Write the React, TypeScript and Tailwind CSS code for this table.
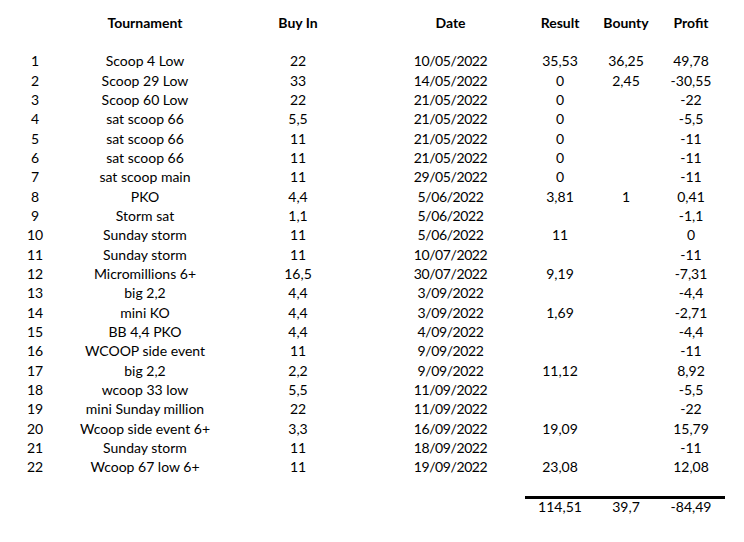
const rows: [string, string, string, string, string, string][] = [
  ["Scoop 4 Low", "22", "10/05/2022", "35,53", "36,25", "49,78"],
  ["Scoop 29 Low", "33", "14/05/2022", "0", "2,45", "-30,55"],
  ["Scoop 60 Low", "22", "21/05/2022", "0", "", "-22"],
  ["sat scoop 66", "5,5", "21/05/2022", "0", "", "-5,5"],
  ["sat scoop 66", "11", "21/05/2022", "0", "", "-11"],
  ["sat scoop 66", "11", "21/05/2022", "0", "", "-11"],
  ["sat scoop main", "11", "29/05/2022", "0", "", "-11"],
  ["PKO", "4,4", "5/06/2022", "3,81", "1", "0,41"],
  ["Storm sat", "1,1", "5/06/2022", "", "", "-1,1"],
  ["Sunday storm", "11", "5/06/2022", "11", "", "0"],
  ["Sunday storm", "11", "10/07/2022", "", "", "-11"],
  ["Micromillions 6+", "16,5", "30/07/2022", "9,19", "", "-7,31"],
  ["big 2,2", "4,4", "3/09/2022", "", "", "-4,4"],
  ["mini KO", "4,4", "3/09/2022", "1,69", "", "-2,71"],
  ["BB 4,4 PKO", "4,4", "4/09/2022", "", "", "-4,4"],
  ["WCOOP side event", "11", "9/09/2022", "", "", "-11"],
  ["big 2,2", "2,2", "9/09/2022", "11,12", "", "8,92"],
  ["wcoop 33 low", "5,5", "11/09/2022", "", "", "-5,5"],
  ["mini Sunday million", "22", "11/09/2022", "", "", "-22"],
  ["Wcoop side event 6+", "3,3", "16/09/2022", "19,09", "", "15,79"],
  ["Sunday storm", "11", "18/09/2022", "", "", "-11"],
  ["Wcoop 67 low 6+", "11", "19/09/2022", "23,08", "", "12,08"],
];

const grid = "grid grid-cols-[70px_150px_156px_149px_70px_62px_68px] items-center text-center h-[19.33px]";

export default function App() {
  return (
    <div
      className="w-[744px] h-[542px] bg-white text-black overflow-hidden pt-[13px] text-[14px] leading-none"
      style={{ fontFamily: "Lato, 'Liberation Sans', sans-serif" }}
    >
      <div className={grid + " font-bold"}>
        <div></div>
        <div>Tournament</div>
        <div>Buy In</div>
        <div>Date</div>
        <div>Result</div>
        <div>Bounty</div>
        <div>Profit</div>
      </div>
      <div className="h-[19.33px]"></div>
      {rows.map((r, i) => (
        <div key={i} className={grid}>
          <div>{i + 1}</div>
          <div>{r[0]}</div>
          <div>{r[1]}</div>
          <div className="tracking-[-0.4px]">{r[2]}</div>
          <div>{r[3]}</div>
          <div>{r[4]}</div>
          <div>{r[5]}</div>
        </div>
      ))}
      <div className="h-[19px]"></div>
      <div className="grid grid-cols-[70px_150px_156px_149px_70px_62px_68px] text-center">
        <div></div>
        <div></div>
        <div></div>
        <div></div>
        <div className="border-t-[3px] border-black h-[20px] flex items-center justify-center">114,51</div>
        <div className="border-t-[3px] border-black h-[20px] flex items-center justify-center">39,7</div>
        <div className="border-t-[3px] border-black h-[20px] flex items-center justify-center">-84,49</div>
      </div>
    </div>
  );
}
